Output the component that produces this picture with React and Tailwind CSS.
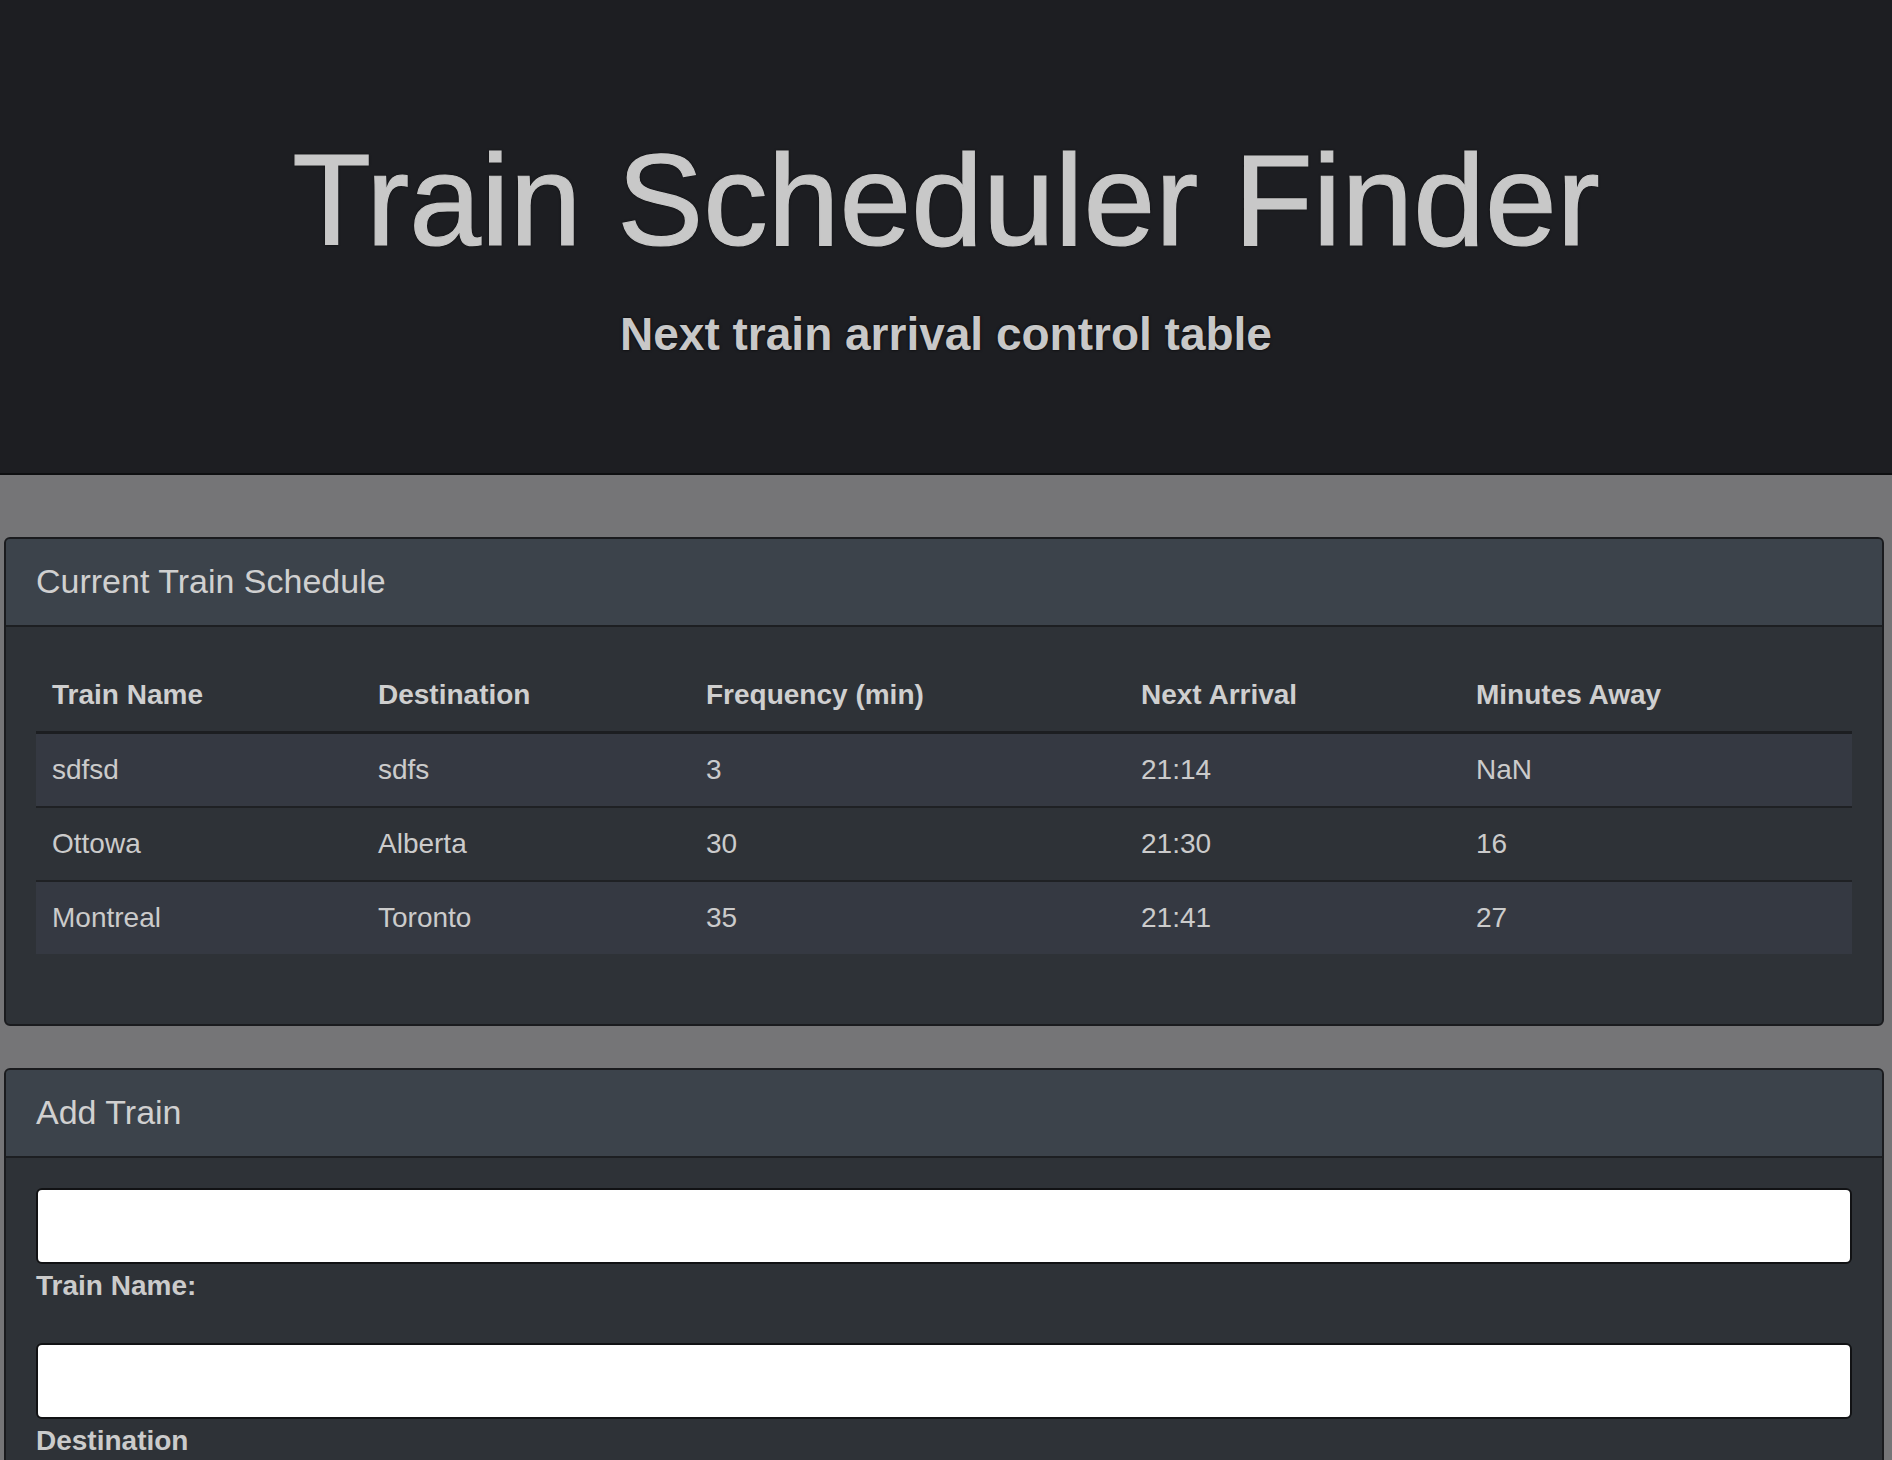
export default function App() {
  const rows = [
    ["sdfsd", "sdfs", "3", "21:14", "NaN"],
    ["Ottowa", "Alberta", "30", "21:30", "16"],
    ["Montreal", "Toronto", "35", "21:41", "27"],
  ];
  const cols = ["Train Name", "Destination", "Frequency (min)", "Next Arrival", "Minutes Away"];
  const fields = ["Train Name:", "Destination", "First Train Time (HH:mm - military time)", "Frequency (min)"];
  return (
    <div className="min-h-screen bg-[#757577] font-['Liberation_Sans',Arial,sans-serif] text-[#cbcbcb] pb-[40px]">
      <header className="bg-[#1d1e22] border-b-2 border-[#0e0f11] pt-[124px] pb-[111px] text-center text-[#c8c8c8]">
        <h1 className="text-[129px] leading-[1.19] [-webkit-text-stroke:1.2px_#c8c8c8] [text-shadow:0_0_3px_rgba(0,0,0,0.9)]">
          Train Scheduler Finder
        </h1>
        <p className="mt-[29px] text-[46px] font-bold leading-[1.2] [text-shadow:0_0_3px_rgba(0,0,0,0.9)]">
          Next train arrival control table
        </p>
      </header>

      <main className="pt-[62px] pl-[4px] pr-[8px] flex flex-col gap-[42px]">
        <section className="rounded-[6px] border-2 border-[#1a1b1e] bg-[#2e3237] overflow-hidden">
          <div className="h-[88px] bg-[#3c434b] border-b-2 border-[#1d1f22] px-[30px] flex items-center text-[34px] text-[#d0d0d0]">
            Current Train Schedule
          </div>
          <div className="px-[30px] pt-[33px] pb-[70px]">
            <div className="grid grid-cols-[326px_328px_435px_335px_392px] h-[74px] items-center border-b-[3px] border-[#1c1e21] font-bold text-[28px] text-[#cfcfcf]">
              {cols.map((c) => (
                <div key={c} className="px-[16px]">{c}</div>
              ))}
            </div>
            {rows.map((r, i) => (
              <div
                key={i}
                className={
                  "grid grid-cols-[326px_328px_435px_335px_392px] h-[72px] items-center text-[28px] " +
                  (i % 2 === 0 ? "bg-[#353942] " : "bg-[#2e3237] ") +
                  (i > 0 ? "border-t-2 border-[#1f2124] box-content" : "")
                }
              >
                {r.map((c, j) => (
                  <div key={j} className="px-[16px]">{c}</div>
                ))}
              </div>
            ))}
          </div>
        </section>

        <section className="rounded-[6px] border-2 border-[#1a1b1e] bg-[#2e3237] overflow-hidden">
          <div className="h-[88px] bg-[#3c434b] border-b-2 border-[#1d1f22] px-[30px] flex items-center text-[34px] text-[#d0d0d0]">
            Add Train
          </div>
          <div className="px-[30px] pt-[30px] pb-[40px] flex flex-col gap-[36px]">
            {fields.map((f) => (
              <div key={f} className="flex flex-col">
                <input
                  type="text"
                  className="h-[76px] w-full rounded-[6px] border-2 border-[#111214] bg-white px-[16px] text-[26px] text-[#333] outline-none"
                />
                <label className="mt-[1px] text-[28px] leading-[1.5] font-bold text-[#cbcbcb]">{f}</label>
              </div>
            ))}
            <div>
              <button className="h-[62px] px-[24px] rounded-[6px] bg-[#4a5059] border-2 border-[#1a1b1e] text-[26px] text-[#d0d0d0]">
                Submit
              </button>
            </div>
          </div>
        </section>
      </main>
    </div>
  );
}
